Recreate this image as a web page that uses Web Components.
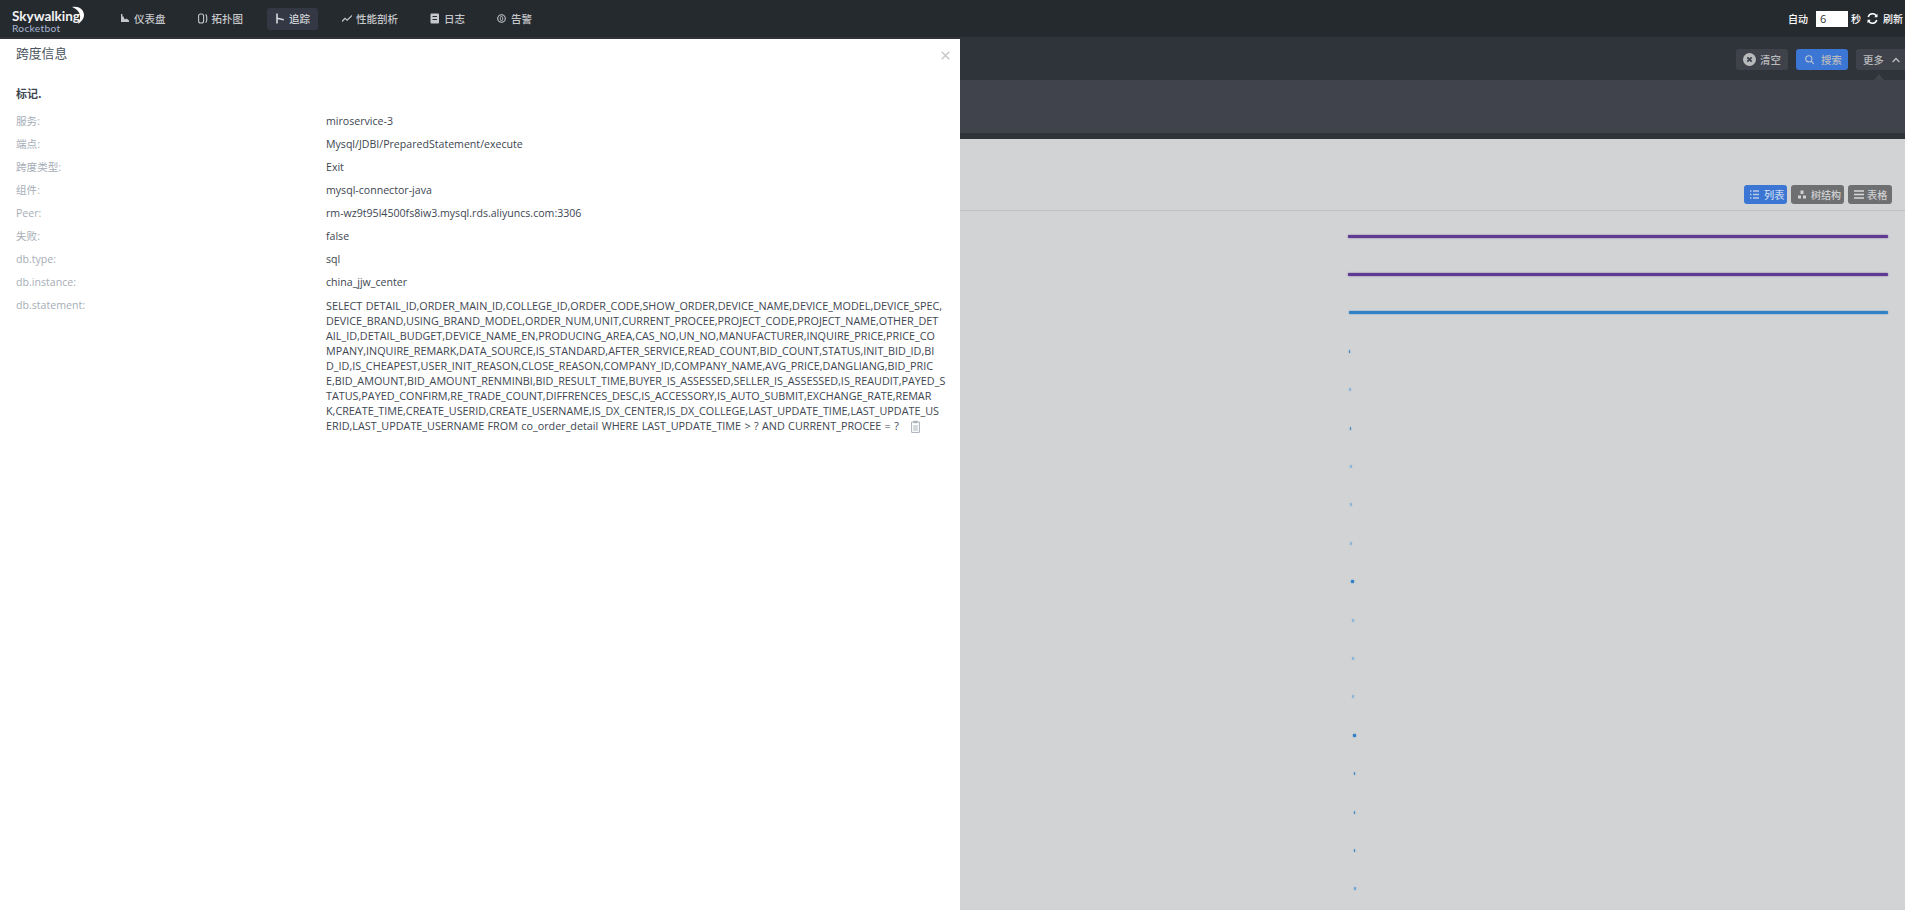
<!DOCTYPE html>
<html lang="zh">
<head>
<meta charset="utf-8">
<title>Rocketbot</title>
<style>
html, body { margin: 0; height: 100%; overflow: hidden; }
body { position: relative; background: #d2d3d5; font-family: "Open Sans", "Noto Sans CJK SC", sans-serif; }
</style>
</head>
<body>
<sw-nav>
  <sw-nav-item icon="dashboard">仪表盘</sw-nav-item>
  <sw-nav-item icon="topology">拓扑图</sw-nav-item>
  <sw-nav-item icon="trace" active>追踪</sw-nav-item>
  <sw-nav-item icon="profile">性能剖析</sw-nav-item>
  <sw-nav-item icon="log">日志</sw-nav-item>
  <sw-nav-item icon="alarm">告警</sw-nav-item>
</sw-nav>
<sw-toolbar></sw-toolbar>
<sw-trace-view>
  <sw-trace-row left="1348" width="540" color="#5e3a92"></sw-trace-row>
  <sw-trace-row left="1348" width="540" color="#5e3a92"></sw-trace-row>
  <sw-trace-row left="1349" width="539" color="#3182c4"></sw-trace-row>
  <sw-trace-row left="1349" width="1" color="#3f86c4"></sw-trace-row>
  <sw-trace-row left="1349" width="2" color="#8db4d8"></sw-trace-row>
  <sw-trace-row left="1350" width="1" color="#3f86c4"></sw-trace-row>
  <sw-trace-row left="1350" width="2" color="#8db4d8"></sw-trace-row>
  <sw-trace-row left="1350" width="2" color="#8db4d8"></sw-trace-row>
  <sw-trace-row left="1350" width="2" color="#8db4d8"></sw-trace-row>
  <sw-trace-row left="1351" width="3" color="#2d80c8"></sw-trace-row>
  <sw-trace-row left="1352" width="2" color="#8db4d8"></sw-trace-row>
  <sw-trace-row left="1352" width="2" color="#8db4d8"></sw-trace-row>
  <sw-trace-row left="1352" width="2" color="#8db4d8"></sw-trace-row>
  <sw-trace-row left="1353" width="3" color="#2d80c8"></sw-trace-row>
  <sw-trace-row left="1354" width="1" color="#3f86c4"></sw-trace-row>
  <sw-trace-row left="1354" width="1" color="#3f86c4"></sw-trace-row>
  <sw-trace-row left="1354" width="1" color="#3f86c4"></sw-trace-row>
  <sw-trace-row left="1354" width="2" color="#6ea4d2"></sw-trace-row>
</sw-trace-view>
<sw-span-drawer title="跨度信息">
  <sw-span-tag label="服务:">miroservice-3</sw-span-tag>
  <sw-span-tag label="端点:">Mysql/JDBI/PreparedStatement/execute</sw-span-tag>
  <sw-span-tag label="跨度类型:">Exit</sw-span-tag>
  <sw-span-tag label="组件:">mysql-connector-java</sw-span-tag>
  <sw-span-tag label="Peer:">rm-wz9t95l4500fs8iw3.mysql.rds.aliyuncs.com:3306</sw-span-tag>
  <sw-span-tag label="失败:">false</sw-span-tag>
  <sw-span-tag label="db.type:">sql</sw-span-tag>
  <sw-span-tag label="db.instance:">china_jjw_center</sw-span-tag>
  <sw-span-tag label="db.statement:" copy><div>SELECT DETAIL_ID,ORDER_MAIN_ID,COLLEGE_ID,ORDER_CODE,SHOW_ORDER,DEVICE_NAME,DEVICE_MODEL,DEVICE_SPEC,</div><div>DEVICE_BRAND,USING_BRAND_MODEL,ORDER_NUM,UNIT,CURRENT_PROCEE,PROJECT_CODE,PROJECT_NAME,OTHER_DET</div><div>AIL_ID,DETAIL_BUDGET,DEVICE_NAME_EN,PRODUCING_AREA,CAS_NO,UN_NO,MANUFACTURER,INQUIRE_PRICE,PRICE_CO</div><div>MPANY,INQUIRE_REMARK,DATA_SOURCE,IS_STANDARD,AFTER_SERVICE,READ_COUNT,BID_COUNT,STATUS,INIT_BID_ID,BI</div><div>D_ID,IS_CHEAPEST,USER_INIT_REASON,CLOSE_REASON,COMPANY_ID,COMPANY_NAME,AVG_PRICE,DANGLIANG,BID_PRIC</div><div>E,BID_AMOUNT,BID_AMOUNT_RENMINBI,BID_RESULT_TIME,BUYER_IS_ASSESSED,SELLER_IS_ASSESSED,IS_REAUDIT,PAYED_S</div><div>TATUS,PAYED_CONFIRM,RE_TRADE_COUNT,DIFFRENCES_DESC,IS_ACCESSORY,IS_AUTO_SUBMIT,EXCHANGE_RATE,REMAR</div><div>K,CREATE_TIME,CREATE_USERID,CREATE_USERNAME,IS_DX_CENTER,IS_DX_COLLEGE,LAST_UPDATE_TIME,LAST_UPDATE_US</div><div>ERID,LAST_UPDATE_USERNAME FROM co_order_detail WHERE LAST_UPDATE_TIME &gt; ? AND CURRENT_PROCEE = ?</div></sw-span-tag>
</sw-span-drawer>

<script>
const navIcons = {
  dashboard: `<path d="M1 1v8h8V7.600L6.600 5.600 4.800 6.600 3.400 3.400 2.400 3.600V1z" fill="currentColor"/>`,
  topology: `<rect x="0.600" y="1" width="5" height="9" rx="2" fill="none" stroke="currentColor" stroke-width="1.100"/><path d="M7.600 1.400c1.600.8 1.600 7.400 0 8.200" fill="none" stroke="currentColor" stroke-width="1.100"/>`,
  trace: `<path d="M2 0.500v10M2 5.200l6.800 1.600" fill="none" stroke="currentColor" stroke-width="1.600"/>`,
  profile: `<path d="M0 8.500l3-3.200 2.200 1.800L10 2.500" fill="none" stroke="currentColor" stroke-width="1.200"/>`,
  log: `<path fill-rule="evenodd" d="M1.500.5h6.500a1 1 0 0 1 1 1v8a1 1 0 0 1-1 1H1.500a1 1 0 0 1-1-1v-8a1 1 0 0 1 1-1zM2.500 3v1h4.500V3zM2.500 6v1h4.500V6z" fill="currentColor"/>`,
  alarm: `<circle cx="4.500" cy="5.500" r="3.800" fill="none" stroke="currentColor" stroke-width="1.100"/><rect x="3.300" y="3.400" width="2.400" height="4.200" rx="1.200" fill="none" stroke="currentColor" stroke-width=".9"/>`,
};

const nav = document.createElement("template");
nav.innerHTML = `
<style>
:host {
  display: flex;
  align-items: center;
  height: 37px;
  background: #252a2f;
  color: #fff;
  font-size: 10px;
}
.logo {
  position: relative;
  width: 112px;
  height: 37px;
  flex: none;
}
.brand {
  position: absolute;
  left: 12px;
  top: 8px;
  font: 700 13.5px/17px Lato, sans-serif;
  color: #f2f3f4;
}
.sub {
  position: absolute;
  left: 12px;
  top: 22px;
  font: 10.3px/12px Lato, sans-serif;
  letter-spacing: .25px;
  color: #a8b4d0;
}
.logo svg { position: absolute; left: 71px; top: 6px; }
.items { display: flex; gap: 16px; }
.auto {
  margin-left: auto;
  display: flex;
  align-items: center;
  height: 16px;
  font-weight: 500;
  font-family: "Noto Sans CJK SC", sans-serif;
  line-height: 16px;
}
.box {
  width: 28px;
  height: 16px;
  margin: 0 3px 0 8px;
  padding-left: 4px;
  background: #fff;
  color: #333;
  font: 11px/16px "Open Sans", sans-serif;
}
.auto svg { margin: 0 5px 0 6px; }
</style>
<div class="logo">
  <span class="brand">Skywalking</span>
  <span class="sub">Rocketbot</span>
  <svg width="14" height="19" viewBox="0 0 14 19"><path d="M1 1C7-.5 13 3 13 9c0 4-3 7-6 9 2-5 3-8 1-11.500C6.500 4 4 2 1 1z" fill="#fff"/></svg>
</div>
<div class="items"><slot></slot></div>
<div class="auto">
  <span>自动</span>
  <div class="box">6</div>
  <span>秒</span>
  <svg width="11" height="11" viewBox="0 0 11 11"><path d="M9.600 3.400A4.500 4.500 0 0 0 1.200 4M1.400 7.600A4.500 4.500 0 0 0 9.800 7" fill="none" stroke="#fff" stroke-width="1.500"/><path d="M10.500 .8v3.400H7.200zM.5 10.200V6.800h3.300z" fill="#fff"/></svg>
  <span style="margin-right:2px">刷新</span>
</div>
`;

class SwNav extends HTMLElement {
  constructor() {
    super();
    this.attachShadow({ mode: "open" });
    this.shadowRoot.appendChild(nav.content.cloneNode(true));
  }
}

const navItem = document.createElement("template");
navItem.innerHTML = `
<style>
:host {
  display: flex;
  align-items: center;
  gap: 4px;
  height: 22px;
  padding: 0 8px;
  border-radius: 3px;
  color: #c5c7ca;
  font-family: "Noto Sans CJK SC", sans-serif;
  font-size: 10.5px;
  font-weight: 500;
  white-space: nowrap;
}
:host([active]) { background: #333844; color: #d5d7da; }
svg { flex: none; width: 10px; height: 11px; }
</style>
<svg viewBox="0 0 10 11"></svg><slot></slot>
`;

class SwNavItem extends HTMLElement {
  constructor() {
    super();
    this.attachShadow({ mode: "open" });
    this.shadowRoot.appendChild(navItem.content.cloneNode(true));
  }
  connectedCallback() {
    this.shadowRoot.querySelector("svg").innerHTML = navIcons[this.getAttribute("icon")];
  }
}

const toolbar = document.createElement("template");
toolbar.innerHTML = `
<style>
:host { display: block; background: #2f343b; padding-bottom: 6px; overflow: hidden; }
.bar {
  display: flex;
  justify-content: flex-end;
  gap: 8px;
  height: 31px;
  padding-top: 12px;
  margin-right: -6px;
}
.panel { position: relative; height: 53px; background: #40434c; }
.arrow {
  position: absolute;
  right: 21px;
  top: -6px;
  width: 0;
  height: 0;
  border: 5.500px solid transparent;
  border-top: 0;
  border-bottom: 6px solid #40434c;
}
.btn {
  display: flex;
  align-items: center;
  gap: 4px;
  width: 52px;
  height: 21px;
  padding-left: 7px;
  box-sizing: border-box;
  border-radius: 3px;
  background: #3f424b;
  color: #b9babc;
  font: 500 10.4px/21px "Noto Sans CJK SC", sans-serif;
  white-space: nowrap;
}
.search { background: #3b76d4; gap: 7px; padding-left: 9px; }
.more { gap: 8px; width: 55px; }
</style>
<div class="bar">
  <div class="btn">
    <svg width="13" height="13" viewBox="0 0 13 13"><circle cx="6.500" cy="6.500" r="6.500" fill="#b9babc"/><path d="M4.300 4.300l4.400 4.400M8.700 4.300l-4.400 4.400" stroke="#3f424b" stroke-width="1.800"/></svg>
    清空
  </div>
  <div class="btn search">
    <svg width="9" height="10" viewBox="0 0 9 10"><circle cx="3.800" cy="3.800" r="3.100" fill="none" stroke="#b9c3d3" stroke-width="1.100"/><path d="M6 6l3 3" stroke="#b9c3d3" stroke-width="1.100"/></svg>
    搜索
  </div>
  <div class="btn more">
    更多
    <svg width="8" height="6" viewBox="0 0 8 6"><path d="M.6 5l3.400-3.500L7.400 5" fill="none" stroke="#b9babc" stroke-width="1.400"/></svg>
  </div>
</div>
<div class="panel"><div class="arrow"></div></div>
`;

class SwToolbar extends HTMLElement {
  constructor() {
    super();
    this.attachShadow({ mode: "open" });
    this.shadowRoot.appendChild(toolbar.content.cloneNode(true));
  }
}

const traceView = document.createElement("template");
traceView.innerHTML = `
<style>
:host { display: block; padding-top: 46px; }
.head {
  display: flex;
  justify-content: flex-end;
  gap: 4px;
  height: 25px;
  padding-right: 13px;
  border-bottom: 1px solid #bfc0c2;
}
.tab {
  display: flex;
  align-items: center;
  gap: 5px;
  height: 19px;
  width: 53px;
  padding-left: 7px;
  box-sizing: border-box;
  border-radius: 3px;
  background: #6e6f71;
  color: #cfd0d2;
  font: 500 10px/19px "Noto Sans CJK SC", sans-serif;
  white-space: nowrap;
}
.tab.list { width: 43px; padding-left: 6px; background: #3b76d4; color: #c4d4ee; font-size: 10.2px; }
.tab.table { width: 44px; padding-left: 6px; gap: 3px; font-size: 10.2px; }
.rows { padding-top: 6px; }
</style>
<div class="head">
  <div class="tab list">
    <svg width="9" height="9" viewBox="0 0 9 9"><path d="M0 1h1.500M3 1h6M0 4.500h1.500M3 4.500h6M0 8h1.500M3 8h6" stroke="#b9c9e4" stroke-width="1.300"/></svg>
    列表
  </div>
  <div class="tab">
    <svg width="8" height="9" viewBox="0 0 8 9"><path d="M2.500.5h3v3.500h-3zM0 5.500h3v3H0zM5 5.500h3v3H5z" fill="#cfd0d2"/></svg>
    树结构
  </div>
  <div class="tab table">
    <svg width="10" height="9" viewBox="0 0 10 9"><path d="M0 1h10M0 4.500h10M0 8h10" stroke="#d8d9da" stroke-width="1.300"/></svg>
    表格
  </div>
</div>
<div class="rows"><slot></slot></div>
`;

class SwTraceView extends HTMLElement {
  constructor() {
    super();
    this.attachShadow({ mode: "open" });
    this.shadowRoot.appendChild(traceView.content.cloneNode(true));
  }
}

const traceRow = document.createElement("template");
traceRow.innerHTML = `
<style>
:host { display: flex; align-items: center; height: 38.4px; }
.bar { height: 3px; border-radius: 1px; }
</style>
<div class="bar"></div>
`;

class SwTraceRow extends HTMLElement {
  constructor() {
    super();
    this.attachShadow({ mode: "open" });
    this.shadowRoot.appendChild(traceRow.content.cloneNode(true));
  }
  connectedCallback() {
    const bar = this.shadowRoot.querySelector(".bar");
    const color = this.getAttribute("color");
    bar.style.marginLeft = this.getAttribute("left") + "px";
    bar.style.width = this.getAttribute("width") + "px";
    bar.style.background = color;
    bar.style.boxShadow = "0 0 1.5px " + color;
  }
}

const drawer = document.createElement("template");
drawer.innerHTML = `
<style>
:host {
  position: absolute;
  top: 39px;
  left: 0;
  bottom: 0;
  width: 960px;
  box-sizing: border-box;
  padding: 5px 16px;
  background: #fff;
}
h3 {
  margin: 0;
  height: 17px;
  font: 400 12.800px/17px "Noto Sans CJK SC", sans-serif;
  color: #4a535e;
}
h4 {
  margin: 24px 0 12px;
  height: 17px;
  font: 700 11px/17px "Noto Sans CJK SC", sans-serif;
  color: #3d4651;
}
.close { position: absolute; top: 12px; right: 10px; }
</style>
<h3></h3>
<svg class="close" width="9" height="9" viewBox="0 0 9 9"><path d="M.7.7l7.600 7.600M8.300.7L.7 8.300" stroke="#c9c9c9" stroke-width="1.500"/></svg>
<h4>标记.</h4>
<slot></slot>
`;

class SwSpanDrawer extends HTMLElement {
  constructor() {
    super();
    this.attachShadow({ mode: "open" });
    this.shadowRoot.appendChild(drawer.content.cloneNode(true));
  }
  connectedCallback() {
    this.shadowRoot.querySelector("h3").textContent = this.getAttribute("title");
    this.removeAttribute("title");
  }
}

const spanTag = document.createElement("template");
spanTag.innerHTML = `
<style>
:host {
  display: grid;
  grid-template-columns: 310px 1fr;
  min-height: 15px;
  margin-bottom: 8px;
  font: 10.600px/15px "Open Sans", "Noto Sans CJK SC", sans-serif;
  color: #3d4651;
}
.label { color: #a7aeb7; }
.value { white-space: nowrap; }
:host([copy]) .value { font-size: 10.800px; word-spacing: .55px; }
svg { vertical-align: -3px; }
.end { margin-top: -15px; margin-left: 585px; height: 15px; }
</style>
<div class="label"></div>
<div class="value"><slot></slot></div>
`;

class SwSpanTag extends HTMLElement {
  constructor() {
    super();
    this.attachShadow({ mode: "open" });
    this.shadowRoot.appendChild(spanTag.content.cloneNode(true));
  }
  connectedCallback() {
    this.shadowRoot.querySelector(".label").textContent = this.getAttribute("label");
    if (this.hasAttribute("copy")) {
      const end = document.createElement("div");
      end.className = "end";
      end.innerHTML = `<svg width="9" height="13" viewBox="0 0 9 13"><path d="M.6 2h7.800v10.400H.6z" fill="none" stroke="#aab0b7"/><path d="M2.500.8h4v2.400h-4z" fill="#aab0b7"/><path d="M2.200 6h4.600M2.200 8h4.600M2.200 10h4.600" stroke="#aab0b7"/></svg>`;
      this.shadowRoot.querySelector(".value").appendChild(end);
    }
  }
}

window.customElements.define("sw-nav", SwNav);
window.customElements.define("sw-nav-item", SwNavItem);
window.customElements.define("sw-toolbar", SwToolbar);
window.customElements.define("sw-trace-view", SwTraceView);
window.customElements.define("sw-trace-row", SwTraceRow);
window.customElements.define("sw-span-drawer", SwSpanDrawer);
window.customElements.define("sw-span-tag", SwSpanTag);
</script>
</body>
</html>
